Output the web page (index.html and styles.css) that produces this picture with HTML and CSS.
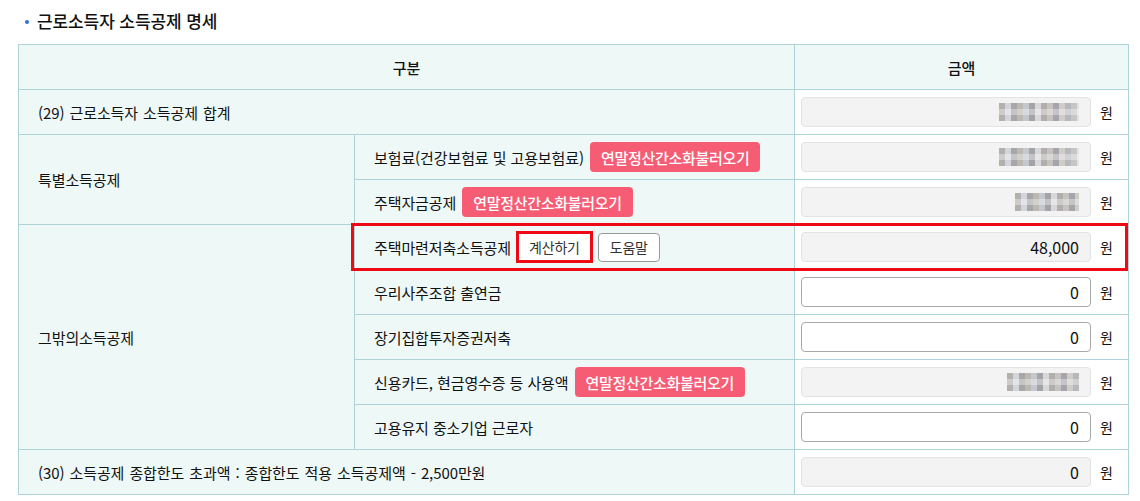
FILE: index.html
```html
<!DOCTYPE html>
<html lang="ko">
<head>
    <meta charset="UTF-8">
    <meta name="viewport" content="width=device-width, initial-scale=1.0">
    <title>근로소득자 소득공제 명세</title>
    <link rel="stylesheet" href="styles.css">
</head>
<body>
    <div class="container">
        <h3 class="section-title">근로소득자 소득공제 명세</h3>

        <div class="table-wrap">
            <table class="deduct-table">
                <colgroup>
                    <col class="col-group">
                    <col class="col-item">
                    <col class="col-amount">
                </colgroup>
                <thead>
                    <tr>
                        <th colspan="2">구분</th>
                        <th>금액</th>
                    </tr>
                </thead>
                <tbody>
                    <tr>
                        <th colspan="2" class="label">(29) 근로소득자 소득공제 합계</th>
                        <td>
                            <div class="amount">
                                <div class="input readonly"><span class="mosaic m1"></span></div>
                                <span class="unit">원</span>
                            </div>
                        </td>
                    </tr>
                    <tr>
                        <th rowspan="2" class="label">특별소득공제</th>
                        <th class="label">
                            <div class="item">보험료(건강보험료 및 고용보험료) <button class="btn-pink">연말정산간소화불러오기</button></div>
                        </th>
                        <td>
                            <div class="amount">
                                <div class="input readonly"><span class="mosaic m2"></span></div>
                                <span class="unit">원</span>
                            </div>
                        </td>
                    </tr>
                    <tr>
                        <th class="label">
                            <div class="item">주택자금공제 <button class="btn-pink">연말정산간소화불러오기</button></div>
                        </th>
                        <td>
                            <div class="amount">
                                <div class="input readonly"><span class="mosaic m3"></span></div>
                                <span class="unit">원</span>
                            </div>
                        </td>
                    </tr>
                    <tr>
                        <th rowspan="5" class="label">그밖의소득공제</th>
                        <th class="label">
                            <div class="item">주택마련저축소득공제 <button class="btn-line marked">계산하기</button><button class="btn-line">도움말</button></div>
                        </th>
                        <td>
                            <div class="amount">
                                <input class="input readonly" type="text" value="48,000" readonly>
                                <span class="unit">원</span>
                            </div>
                        </td>
                    </tr>
                    <tr>
                        <th class="label"><div class="item">우리사주조합 출연금</div></th>
                        <td>
                            <div class="amount">
                                <input class="input" type="text" value="0">
                                <span class="unit">원</span>
                            </div>
                        </td>
                    </tr>
                    <tr>
                        <th class="label"><div class="item">장기집합투자증권저축</div></th>
                        <td>
                            <div class="amount">
                                <input class="input" type="text" value="0">
                                <span class="unit">원</span>
                            </div>
                        </td>
                    </tr>
                    <tr>
                        <th class="label">
                            <div class="item">신용카드, 현금영수증 등 사용액 <button class="btn-pink">연말정산간소화불러오기</button></div>
                        </th>
                        <td>
                            <div class="amount">
                                <div class="input readonly"><span class="mosaic m4"></span></div>
                                <span class="unit">원</span>
                            </div>
                        </td>
                    </tr>
                    <tr>
                        <th class="label"><div class="item">고용유지 중소기업 근로자</div></th>
                        <td>
                            <div class="amount">
                                <input class="input" type="text" value="0">
                                <span class="unit">원</span>
                            </div>
                        </td>
                    </tr>
                    <tr>
                        <th colspan="2" class="label">(30) 소득공제 종합한도 초과액 : 종합한도 적용 소득공제액 - 2,500만원</th>
                        <td>
                            <div class="amount">
                                <input class="input readonly" type="text" value="0" readonly>
                                <span class="unit">원</span>
                            </div>
                        </td>
                    </tr>
                </tbody>
            </table>

            <!-- highlight around the 주택마련저축 row -->
            <div class="row-mark"></div>
        </div>
    </div>
</body>
</html>
```

FILE: styles.css
```css
body {
    margin: 0;
    padding: 0;
    font-family: "Noto Sans CJK KR", "Noto Sans", sans-serif;
    color: #111;
    background-color: #fff;
}

.container {
    padding: 9px 12px 0 18px;
}

.section-title {
    margin: 0 0 11px 0;
    padding-left: 19px;
    position: relative;
    font-size: 17px;
    font-weight: 500;
    line-height: 24px;
    letter-spacing: -0.1px;
}

.section-title::before {
    content: "";
    position: absolute;
    left: 7px;
    top: 11px;
    width: 4px;
    height: 4px;
    border-radius: 50%;
    background-color: #2f6fe0;
}

.table-wrap {
    position: relative;
    width: 1110px;
}

.deduct-table {
    width: 1110px;
    border-collapse: collapse;
    table-layout: fixed;
    font-size: 15px;
    letter-spacing: -0.1px;
}

.col-group {
    width: 336px;
}

.col-item {
    width: 440px;
}

.col-amount {
    width: 334px;
}

.deduct-table th,
.deduct-table td {
    height: 45px;
    padding: 0;
    border: 1px solid #aed3d8;
    box-sizing: border-box;
}

.deduct-table thead th {
    background-color: #eef8f7;
    font-weight: 500;
    text-align: center;
}

.deduct-table th.label {
    background-color: #eef8f7;
    font-weight: 400;
    text-align: left;
    padding-left: 19px;
    word-spacing: 1px;
}

.deduct-table td {
    background-color: #fff;
    padding-left: 6px;
}

.item {
    display: flex;
    align-items: center;
    gap: 6px;
    word-spacing: 0;
}

.btn-pink {
    height: 30px;
    padding: 0 11px;
    border: none;
    border-radius: 4px;
    background-color: #f65d75;
    color: #fff;
    font-family: inherit;
    font-size: 15px;
    font-weight: 500;
    letter-spacing: -0.3px;
    cursor: pointer;
}

.btn-line {
    height: 29px;
    padding: 0 11px;
    border: 1px solid #9a9a9a;
    border-radius: 4px;
    background-color: #fff;
    color: #333;
    font-family: inherit;
    font-size: 14px;
    letter-spacing: -0.2px;
    cursor: pointer;
}

.btn-line.marked {
    height: 32px;
    padding: 0 10px;
    border: 3px solid #ee0a14;
    border-radius: 0;
    margin-left: -1px;
    margin-right: -1px;
}

.amount {
    display: flex;
    align-items: center;
    gap: 9px;
}

.input {
    width: 290px;
    height: 30px;
    box-sizing: border-box;
    padding: 0 11px;
    border: 1px solid #a9a9a9;
    border-radius: 4px;
    background-color: #fff;
    color: #111;
    font-family: inherit;
    font-size: 16px;
    text-align: right;
    display: flex;
    align-items: center;
    justify-content: flex-end;
}

.input.readonly {
    background-color: #f3f3f3;
    border-color: #e3e3e3;
}

.unit {
    font-size: 14px;
}

/* blurred amounts */
.mosaic {
    display: inline-block;
    height: 18px;
    background:
        linear-gradient(180deg, transparent 0 6px, rgba(255, 255, 255, 0.35) 6px 12px, transparent 12px),
        linear-gradient(90deg,
            #b4b0ae 0 6px, #d2d6dc 6px 12px, #a8a6a8 12px 18px, #bcb8b4 18px 24px,
            #c4c8cc 24px 30px, #a2a4a8 30px 36px, #d8d8da 36px 42px, #b2aeac 42px 48px,
            #c6c2c2 48px 54px, #a6a6aa 54px 60px, #d0ccca 60px 66px, #b6b8bc 66px 72px,
            #c8c6c4 72px 78px, #dfe3e6 78px 84px);
}

.m1 {
    width: 80px;
}

.m2 {
    width: 80px;
}

.m3 {
    width: 64px;
}

.m4 {
    width: 72px;
}

.row-mark {
    position: absolute;
    left: 333px;
    top: 179px;
    width: 777px;
    height: 48px;
    box-sizing: border-box;
    border: 3px solid #ee0a14;
    pointer-events: none;
}
```
